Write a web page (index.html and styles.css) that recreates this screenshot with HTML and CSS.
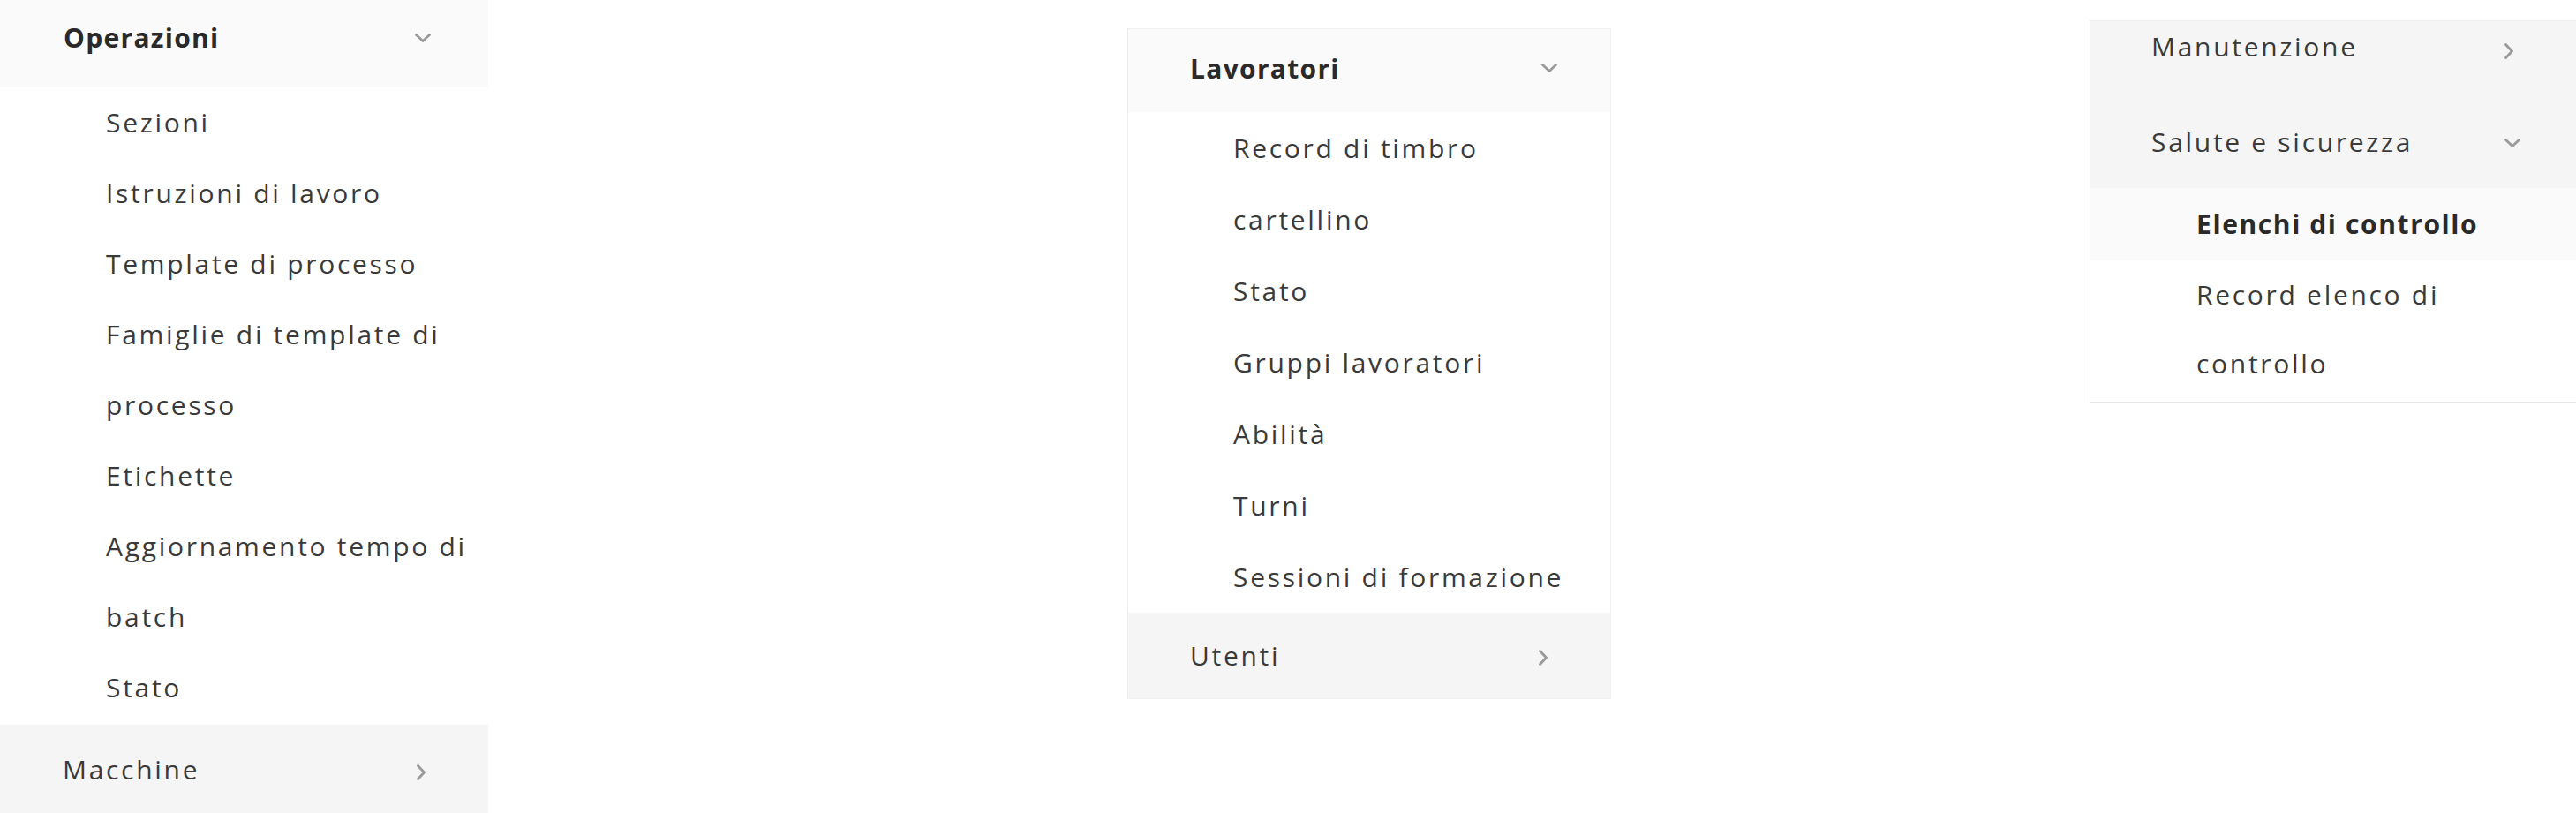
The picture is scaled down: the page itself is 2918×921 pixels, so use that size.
FILE: index.html
```html
<!DOCTYPE html>
<html lang="it">
<head>
<meta charset="utf-8">
<title>Menu</title>
<link rel="stylesheet" href="styles.css">
</head>
<body>
<div class="page">
  <nav class="panel panel-left">
    <div class="row head open hdr-left">
      <span class="label strong">Operazioni</span>
      <svg class="chev-down" width="18" height="10" viewBox="0 0 18 10"><path d="M1.5 1.5 L9 8.5 L16.5 1.5"/></svg>
    </div>
    <ul class="sub sub-left">
      <li>Sezioni</li>
      <li>Istruzioni di lavoro</li>
      <li>Template di processo</li>
      <li>Famiglie di template di processo</li>
      <li>Etichette</li>
      <li>Aggiornamento tempo di batch</li>
      <li>Stato</li>
    </ul>
    <div class="row head closed macchine">
      <span class="label">Macchine</span>
      <svg class="chev-right" width="10" height="18" viewBox="0 0 10 18"><path d="M1.5 1.5 L8.5 9 L1.5 16.5"/></svg>
    </div>
  </nav>

  <nav class="panel panel-mid">
    <div class="row head open hdr-mid">
      <span class="label strong">Lavoratori</span>
      <svg class="chev-down" width="18" height="10" viewBox="0 0 18 10"><path d="M1.5 1.5 L9 8.5 L16.5 1.5"/></svg>
    </div>
    <ul class="sub sub-mid">
      <li>Record di timbro cartellino</li>
      <li>Stato</li>
      <li>Gruppi lavoratori</li>
      <li>Abilità</li>
      <li>Turni</li>
      <li>Sessioni di formazione</li>
    </ul>
    <div class="row head closed utenti">
      <span class="label">Utenti</span>
      <svg class="chev-right" width="10" height="18" viewBox="0 0 10 18"><path d="M1.5 1.5 L8.5 9 L1.5 16.5"/></svg>
    </div>
  </nav>

  <nav class="panel panel-right">
    <div class="row closed manut">
      <span class="label">Manutenzione</span>
      <svg class="chev-right" width="10" height="18" viewBox="0 0 10 18"><path d="M1.5 1.5 L8.5 9 L1.5 16.5"/></svg>
    </div>
    <div class="row closed salute">
      <span class="label">Salute e sicurezza</span>
      <svg class="chev-down" width="18" height="10" viewBox="0 0 18 10"><path d="M1.5 1.5 L9 8.5 L16.5 1.5"/></svg>
    </div>
    <ul class="sub sub-right">
      <li class="active">Elenchi di controllo</li>
      <li>Record elenco di controllo</li>
    </ul>
  </nav>
</div>
</body>
</html>
```

FILE: styles.css
```css
* { box-sizing: border-box; }

html, body {
  margin: 0;
  padding: 0;
  background: #ffffff;
  overflow: hidden;
}

body {
  font-family: "Open Sans", "Noto Sans", sans-serif;
  font-size: 30px;
  font-weight: 500;
  color: #3a3a3a;
  letter-spacing: 2.7px;
}

.page {
  display: flex;
  align-items: flex-start;
  width: 2918px;
  height: 921px;
}

.panel {
  flex: none;
  background: #ffffff;
}

.panel-left {
  width: 553px;
}

.panel-mid {
  width: 548px;
  margin-left: 724px;
  margin-top: 32px;
  border: 1px solid #f0f0f0;
}

.panel-right {
  width: 551px;
  margin-left: 542px;
  margin-top: 23px;
  border-top: 1px solid #eeeeee;
  border-left: 1px solid #f0f0f0;
  border-bottom: 1px solid #e8e8e8;
  padding-bottom: 4px;
}

.row {
  display: flex;
  align-items: center;
  justify-content: space-between;
}

.label {
  white-space: nowrap;
}

.strong {
  font-weight: 700;
  color: #2a2a2a;
  letter-spacing: 1.3px;
}

.open { background: #fafafa; }
.closed { background: #f5f5f5; }

.chev-down, .chev-right {
  flex: none;
  fill: none;
  stroke: #9a9a9a;
  stroke-width: 2.8;
  stroke-linecap: round;
  stroke-linejoin: round;
}

/* left panel */
.hdr-left {
  height: 99px;
  padding: 0 65px 14px 72px;
}

.macchine {
  height: 100px;
  margin-top: 2px;
  padding: 0 71px 0 71px;
}

.macchine .chev-right { margin-top: 8px; }

.sub {
  list-style: none;
  margin: 0;
  padding: 0;
}

.sub li {
  line-height: 80px;
}

.sub-left {
  padding: 0 14px 0 120px;
}

/* middle panel */
.hdr-mid {
  height: 94px;
  padding: 0 60px 6px 70px;
}

.sub-mid {
  padding: 0 25px 0 119px;
}

.sub-mid li {
  line-height: 81px;
}

.utenti {
  height: 97px;
  padding: 0 71px 0 70px;
}

.utenti .chev-right { margin-top: 4px; }

/* right panel */
.manut {
  height: 83px;
  align-items: flex-start;
  padding: 8px 71px 0 69px;
}

.manut .chev-right { margin-top: 17px; }

.salute {
  height: 106px;
  padding: 0 63px 0 69px;
}

.salute .chev-down { margin-top: 4px; }

.sub-right {
  padding: 0 60px 0 120px;
}

.sub-right li {
  line-height: 78px;
}

.sub-right li.active {
  line-height: 82px;
  background: #fafafa;
  margin: 0 -60px 0 -120px;
  padding-left: 120px;
  font-weight: 700;
  color: #2a2a2a;
  letter-spacing: 1.6px;
}
```
